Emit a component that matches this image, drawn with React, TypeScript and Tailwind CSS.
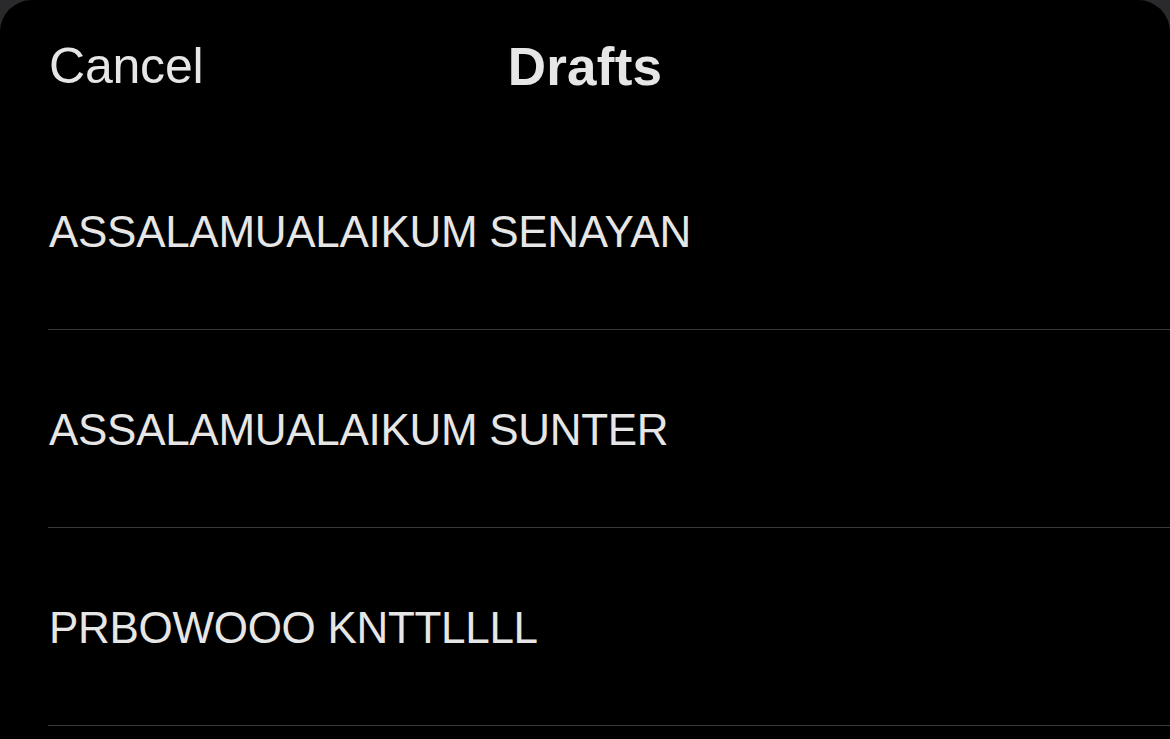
import React from "react";

const drafts = ["ASSALAMUALAIKUM SENAYAN", "ASSALAMUALAIKUM SUNTER", "PRBOWOOO KNTTLLLL"];

export default function App() {
  return (
    <div className="w-[1170px] h-[739px] overflow-hidden bg-[#2a2a2d]" style={{ fontFamily: '"Liberation Sans", Arial, sans-serif' }}>
      <div className="h-full w-full bg-black rounded-t-[32px] text-[#e6e6e6]">
        <div className="relative h-[132px] flex items-center">
          <span className="ml-[49px] text-[50px] leading-none tracking-[-0.2px]">Cancel</span>
          <span className="absolute left-0 right-0 top-0 h-full flex items-center justify-center text-[53px] font-bold leading-none tracking-[0.2px]">Drafts</span>
        </div>
        <div className="ml-[48px]">
          {drafts.map((d) => (
            <div key={d} className="h-[198px] flex items-center border-b border-[#3a3a3c]">
              <span className="ml-[1px] mt-[2px] text-[44px] leading-none tracking-[-0.3px]">{d}</span>
            </div>
          ))}
        </div>
      </div>
    </div>
  );
}
